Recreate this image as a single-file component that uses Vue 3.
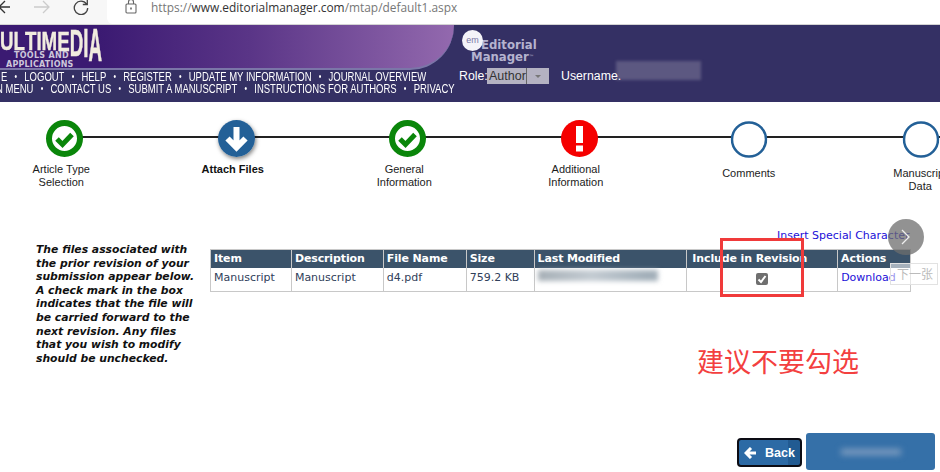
<script setup>
const navOne = ['E', 'LOGOUT', 'HELP', 'REGISTER', 'UPDATE MY INFORMATION', 'JOURNAL OVERVIEW']
const navTwo = ['N MENU', 'CONTACT US', 'SUBMIT A MANUSCRIPT', 'INSTRUCTIONS FOR AUTHORS', 'PRIVACY']
const stretches = [1, 1, 1, 1, 1, 1.05, 1.4, 1.55, 1.8]
const logoLetters = 'ULTIMEDIA'.split('').map((ch, i) => ({ ch, stretch: stretches[i], lift: i > 5 ? -1 - (i - 6) : 0 }))
const steps = [
  { kind: 'done', lines: ['Article Type', 'Selection'] },
  { kind: 'current', lines: ['Attach Files'] },
  { kind: 'done', lines: ['General', 'Information'] },
  { kind: 'alert', lines: ['Additional', 'Information'] },
  { kind: 'empty', lines: ['Comments'] },
  { kind: 'empty', lines: ['Manuscript', 'Data'] }
]
const columns = [
  { name: 'Item', w: 81 },
  { name: 'Description', w: 92 },
  { name: 'File Name', w: 83 },
  { name: 'Size', w: 68 },
  { name: 'Last Modified', w: 153 },
  { name: 'Include in Revision', w: 151 },
  { name: 'Actions', w: 72 }
]
</script>

<template>
  <div class="page">
    <div class="browser">
      <div class="nav-icons">
        <svg class="icon back-arrow" width="10" height="14" viewBox="0 0 10 14"><path d="M10 7H0M5 1 -1 7l6 6" fill="none" stroke="#333" stroke-width="1.3"/></svg>
        <svg class="icon fwd-arrow" width="16" height="14" viewBox="0 0 16 14"><path d="M0 7h15M9 1l6 6-6 6" fill="none" stroke="#ccc" stroke-width="1.3"/></svg>
        <svg class="icon reload" width="16" height="16" viewBox="0 0 16 16"><path d="M13.5 5A6.7 6.7 0 1 0 14.7 9M14.3 1v4.5H9.8" fill="none" stroke="#444" stroke-width="1.3"/></svg>
      </div>
      <div class="url-box">
        <svg class="lock" width="12" height="15" viewBox="0 0 12 15"><rect x="1" y="5" width="10" height="9" rx="1" fill="none" stroke="#666" stroke-width="1.1"/><path d="M3.5 5V3a2.5 2.5 0 0 1 5 0v2" fill="none" stroke="#666" stroke-width="1.1"/><rect x="5.2" y="8.5" width="1.6" height="2" fill="#666"/></svg>
        <span class="url"><span class="dim">https://</span>www.editorialmanager.com<span class="dim">/mtap/default1.aspx</span></span>
      </div>
    </div>

    <header class="header">
      <div class="header-left">
        <div class="banner">
          <div class="logo">
            <div class="logo-main"><span v-for="(l, i) in logoLetters" :key="i" class="logo-letter" :style="{ transform: `translateY(${l.lift}px) scaleY(${l.stretch})` }">{{ l.ch }}</span></div>
            <div class="logo-sub tools">TOOLS AND</div>
            <div class="logo-sub apps">APPLICATIONS</div>
          </div>
        </div>
        <nav class="menu">
          <div class="menu-row first">
            <template v-for="(item, i) in navOne" :key="item"><span v-if="i" class="dot">•</span><span>{{ item }}</span></template>
          </div>
          <div class="menu-row second">
            <template v-for="(item, i) in navTwo" :key="item"><span v-if="i" class="dot">•</span><span>{{ item }}</span></template>
          </div>
        </nav>
      </div>
      <div class="header-right">
        <div class="em-logo">
          <div class="em-text"><div>Editorial</div><div class="mgr">Manager<sup>™</sup></div></div>
          <div class="em-bubble">em</div>
        </div>
        <div class="role-row">
          <span class="role">Role:</span>
          <span class="select"><span class="select-value">Author</span><span class="select-btn"><i></i></span></span>
          <span class="username">Username.</span>
          <span class="smudge"></span>
        </div>
      </div>
    </header>

    <section class="stepper">
      <div class="line"></div>
      <div v-for="s in steps" :key="s.lines[0]" class="step" :class="s.kind">
        <div class="disc">
          <svg v-if="s.kind === 'done'" width="37" height="37" viewBox="0 0 37 37"><circle cx="18.5" cy="18.5" r="15.5" fill="#fff" stroke="#0a860a" stroke-width="6"/><path d="M11 19l5.5 5.5L26 14.500" fill="none" stroke="#0a860a" stroke-width="5"/></svg>
          <svg v-else-if="s.kind === 'current'" width="37" height="37" viewBox="0 0 37 37"><circle cx="18.5" cy="18.500" r="18.500" fill="#236097"/><path d="M18.500 7v20M9.500 18.500l9 9 9-9" fill="none" stroke="#fff" stroke-width="6"/></svg>
          <svg v-else-if="s.kind === 'alert'" width="37" height="37" viewBox="0 0 37 37"><circle cx="18.500" cy="18.500" r="18.500" fill="#f50000"/><rect x="15" y="6" width="7" height="17" fill="#fff"/><rect x="15" y="25.500" width="7" height="6" fill="#fff"/></svg>
          <svg v-else width="37" height="37" viewBox="0 0 37 37"><circle cx="18.500" cy="18.500" r="17" fill="#fff" stroke="#236097" stroke-width="2.500"/></svg>
        </div>
        <div class="step-label"><div v-for="l in s.lines" :key="l">{{ l }}</div></div>
      </div>
    </section>

    <div class="special-row"><a class="special">Insert Special Character</a></div>

    <section class="content">
      <p class="help">The files associated with the prior revision of your submission appear below. A check mark in the box indicates that the file will be carried forward to the next revision. Any files that you wish to modify should be unchecked.</p>
      <div class="table">
        <div class="thead">
          <div v-for="c in columns" :key="c.name" class="th" :style="{ width: c.w + 'px' }">{{ c.name }}</div>
        </div>
        <div class="tbody">
          <div class="td" :style="{ width: columns[0].w + 'px' }">Manuscript</div>
          <div class="td" :style="{ width: columns[1].w + 'px' }">Manuscript</div>
          <div class="td" :style="{ width: columns[2].w + 'px' }">d4.pdf</div>
          <div class="td" :style="{ width: columns[3].w + 'px' }">759.2 KB</div>
          <div class="td modified" :style="{ width: columns[4].w + 'px' }"><span class="blur"></span></div>
          <div class="td center" :style="{ width: columns[5].w + 'px' }">
            <span class="checkbox"><svg width="12" height="12" viewBox="0 0 12 12"><path d="M2.500 6.500l2.500 2.500 4.500-6" fill="none" stroke="#fff" stroke-width="2"/></svg></span>
          </div>
          <div class="td link" :style="{ width: columns[6].w + 'px' }">Download</div>
        </div>
      </div>
    </section>

    <div class="advice">建议不要勾选</div>

    <div class="actions">
      <button class="back">
        <svg width="13" height="12" viewBox="0 0 13 12"><path d="M12 6H3M7 1 2 6l5 5" fill="none" stroke="#fff" stroke-width="3"/></svg>
        <span>Back</span>
      </button>
      <div class="next"><span class="next-blur"></span></div>
    </div>

    <div class="red-box"></div>
    <div class="viewer-next">
      <svg width="12" height="20" viewBox="0 0 12 20"><path d="M2 3l7 7-7 7" fill="none" stroke="#eee" stroke-width="1.300"/></svg>
    </div>
    <div class="viewer-tip">下一张</div>
  </div>
</template>

<style>
html, body { margin: 0; padding: 0; background: #fff; }
</style>

<style scoped>
.page {
  position: relative;
  width: 940px;
  height: 472px;
  overflow: hidden;
  background: #fff;
  font-family: "Liberation Sans", sans-serif;
}
.browser {
  height: 24px;
  display: flex;
  background: #f7f7f7;
  border-bottom: 1px solid #d4d4d4;
}
.nav-icons {
  width: 107px;
  position: relative;
  flex: none;
}
.icon { position: absolute; }
.back-arrow { left: 0; top: 0; }
.fwd-arrow { left: 34px; top: 0; }
.reload { left: 73px; top: -1px; }
.url-box {
  flex: 1;
  background: #fff;
  border-bottom-left-radius: 6px;
  display: flex;
  align-items: flex-start;
}
.lock { margin: -1px 0 0 18px; }
.url {
  margin: 0 0 0 14px;
  font: 11.900px/14px "Open Sans", sans-serif;
  color: #333;
}
.dim { color: #777; }

.header {
  height: 77px;
  display: flex;
  background: #343064;
  color: #fff;
}
.header-left { width: 458px; flex: none; }
.banner {
  width: 454px;
  height: 45px;
  background: linear-gradient(90deg, #3b1a72 0%, #3b1a72 22%, #5a3587 55%, #9369ae 100%);
  border-bottom: 2px solid #7b76a8;
  border-bottom-right-radius: 44px 44px;
  box-sizing: border-box;
  overflow: hidden;
}
.logo { width: 104px; position: relative; height: 43px; }
.logo-main {
  font: bold 26px/20px "Liberation Sans", sans-serif;
  color: #f1ecdf;
  -webkit-text-stroke: .4px #f1ecdf;
  transform: scaleX(.72);
  transform-origin: 0 0;
  white-space: nowrap;
  padding-top: 6px;
  height: 18px;
}
.logo-letter { display: inline-block; transform-origin: 50% 2px; }
.logo-sub {
  font: bold 8px/9px "DejaVu Sans", sans-serif;
  color: #cdc6da;
  white-space: nowrap;
  position: relative;
}
.tools { margin: 2px 0 0 14px; letter-spacing: .3px; }
.apps { margin: 0 0 0 6px; letter-spacing: .2px; }
.menu { font: 13px/12px "Liberation Sans", sans-serif; }
.menu-row {
  display: flex;
  white-space: nowrap;
  height: 12px;
  align-items: center;
  transform: scaleX(.73);
  transform-origin: 0 50%;
}
.menu-row.first { margin: 1px 0 0 1px; }
.menu-row.second { margin-left: -4px; }
.dot { margin: 0 9.900px; font-size: 10px; }
.header-right { flex: 1; position: relative; }
.em-logo { position: relative; height: 43px; margin-left: 3px; }
.em-bubble {
  position: absolute;
  left: 1px;
  top: 5px;
  width: 21px;
  height: 21px;
  border-radius: 50%;
  background: #f4f3f8;
  color: #7a78a5;
  font: 9px/21px "Liberation Sans", sans-serif;
  text-align: center;
}
.em-text {
  margin-left: 20px;
  padding-top: 13px;
  font: bold 13px/13px "DejaVu Sans Condensed", "DejaVu Sans", sans-serif;
  color: #b5b3cf;
  white-space: nowrap;
}
.mgr { margin: -1px 0 0 -10px; }
.mgr sup { font-size: 6px; vertical-align: top; font-weight: normal; }
.role-row {
  display: flex;
  align-items: center;
  font: 12.300px/16px "Liberation Sans", sans-serif;
  margin: 0 0 0 1px;
  height: 16px;
  position: relative;
}
.role { width: 28px; }
.select {
  display: flex;
  width: 62px;
  height: 16px;
  background: #b4b2c2;
  color: #333;
  margin-left: 0;
  flex: none;
}
.select-value { width: 40px; border-right: 1px solid #666; padding-left: 2px; box-sizing: border-box; font-size: 12.500px; }
.select-btn { flex: 1; display: flex; align-items: center; justify-content: center; }
.select-btn i { width: 0; height: 0; border: 3.500px solid transparent; border-top: 3.500px solid #777; margin-top: 4px; }
.username { margin-left: 12px; position: relative; z-index: 1; }
.smudge {
  width: 85px;
  height: 19px;
  margin-left: -5px;
  background: #5c5881;
  filter: blur(1.500px);
  transform: translateY(-6px);
}

.stepper {
  position: relative;
  display: flex;
  height: 130px;
  margin-left: -21px;
}
.line {
  position: absolute;
  left: 86px;
  top: 34px;
  height: 2px;
  background: #222;
  width: 900px;
}
.step {
  position: relative;
  width: 171.500px;
  flex: none;
  display: flex;
  flex-direction: column;
  align-items: center;
  padding-top: 18px;
}
.disc { width: 37px; height: 37px; }
.disc svg { display: block; }
.current .disc { border-radius: 50%; box-shadow: 1px 2px 4px rgba(0, 0, 0, .5); }
.empty .disc { transform: translate(-1.500px, 1px); }
.step-label {
  margin-top: 6px;
  font-size: 11px;
  line-height: 13px;
  text-align: center;
  color: #1c1c1c;
  transform: translateX(-3.500px);
  white-space: nowrap;
}
.current .step-label { font-weight: bold; color: #111; }
.empty .step-label { margin-top: 10px; transform: translateX(-2px); }

.special-row {
  position: absolute;
  left: 777px;
  top: 225px;
  white-space: nowrap;
}
.special {
  font: 11px/14px "DejaVu Sans", sans-serif;
  color: #1c0fd8;
}

.content {
  display: flex;
  align-items: flex-start;
  margin-top: 10px;
  padding-left: 36px;
}
.help {
  width: 165px;
  margin: 1px 0 0;
  font: italic bold 10.800px/13.600px "DejaVu Sans", sans-serif;
  color: #111;
}
.table {
  margin-left: 9px;
  margin-top: 7px;
  width: 701px;
  border: 1px solid #c8c8c8;
  box-sizing: border-box;
}
.thead { display: flex; background: #3b536a; }
.th {
  box-sizing: border-box;
  height: 18px;
  padding-left: 3px;
  color: #fff;
  font: bold 11px/18px "DejaVu Sans", sans-serif;
  letter-spacing: -.12px;
  border-right: 1px solid #c8c8c8;
  white-space: nowrap;
}
.th:nth-child(6) { padding-left: 5px; }
.tbody { display: flex; }
.td {
  box-sizing: border-box;
  height: 23px;
  padding: 2px 0 0 3px;
  font: 11px/16px "DejaVu Sans", sans-serif;
  color: #30405a;
  border-right: 1px solid #c8c8c8;
  white-space: nowrap;
  position: relative;
}
.td:last-child, .th:last-child { border-right: 0; }
.center { display: flex; justify-content: center; padding: 5px 0 0; }
.link { color: #1c0fd8; }
.blur {
  position: absolute;
  left: 3px;
  top: 2px;
  width: 120px;
  height: 11px;
  background: linear-gradient(90deg, #a6afb6, #c3cbd2 45%, #a2afb9 90%);
  filter: blur(2.500px);
}
.checkbox {
  width: 12px;
  height: 12px;
  background: #6f6f6f;
  border-radius: 2px;
  display: block;
}
.checkbox svg { display: block; }

.advice {
  position: absolute;
  top: 343px;
  left: 697px;
  font: 27px/36px "Noto Sans CJK SC", sans-serif;
  color: #f34040;
  white-space: nowrap;
}
.actions {
  position: absolute;
  top: 433px;
  left: 737px;
  display: flex;
  gap: 4px;
  align-items: flex-start;
}
.back {
  margin-top: 5px;
  width: 65px;
  height: 29px;
  box-sizing: border-box;
  background: linear-gradient(90deg, #2c6aa5 80%, #225b92 80%);
  border: 2px solid #0c0c14;
  border-radius: 4px;
  color: #fff;
  font: bold 12.500px "Liberation Sans", sans-serif;
  display: flex;
  align-items: center;
  gap: 8px;
  padding: 0 0 0 5px;
  overflow: hidden;
}
.next {
  width: 129px;
  height: 37px;
  background: #3570a8;
  border-radius: 3px;
  display: flex;
  align-items: center;
  justify-content: center;
}
.next-blur {
  width: 60px;
  height: 6px;
  background: #7f9dc0;
  filter: blur(3px);
}
.red-box {
  position: absolute;
  left: 720px;
  top: 238px;
  width: 84px;
  height: 59px;
  box-sizing: border-box;
  border: 3px solid #f03a3a;
}
.viewer-next {
  position: absolute;
  left: 888px;
  top: 219px;
  width: 36px;
  height: 36px;
  border-radius: 50%;
  background: rgba(110, 110, 110, .75);
  display: flex;
  align-items: center;
  justify-content: center;
}
.viewer-tip {
  position: absolute;
  left: 890px;
  top: 263px;
  width: 48px;
  height: 22px;
  box-sizing: border-box;
  background: rgba(255, 255, 255, .55);
  border: 1px solid #e2e2e2;
  color: #bbb;
  font: 12px/20px "Noto Sans CJK SC", sans-serif;
  padding-left: 6px;
}
</style>
